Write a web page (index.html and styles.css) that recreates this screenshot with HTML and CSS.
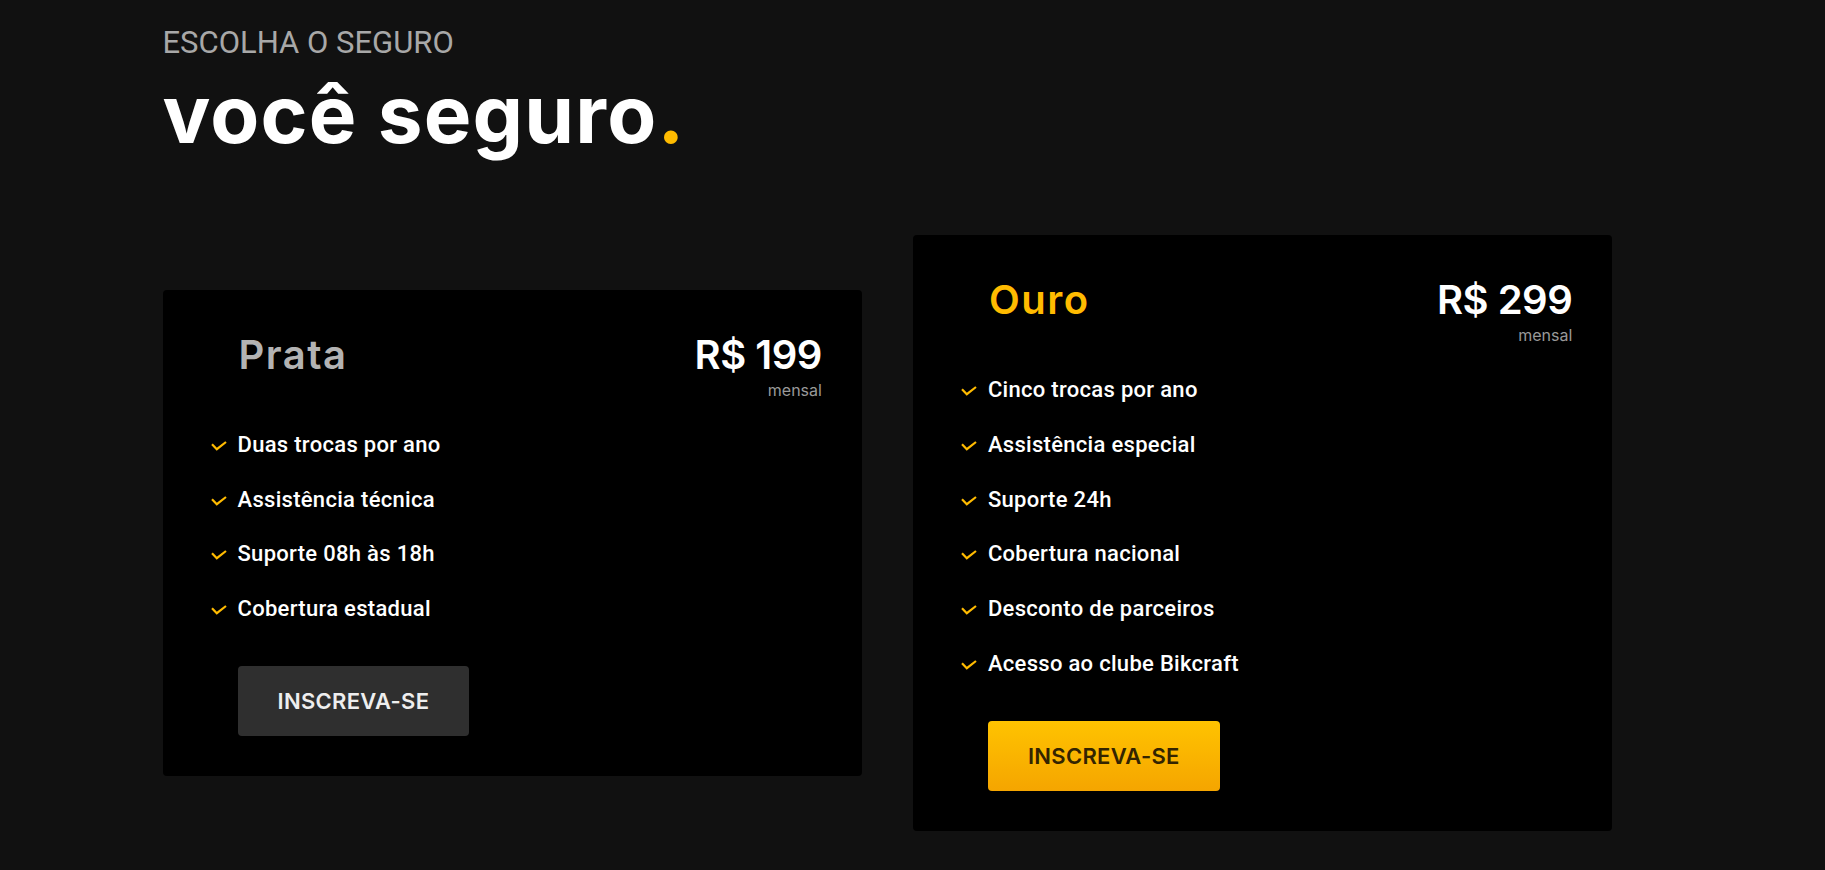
FILE: index.html
```html
<!DOCTYPE html>
<html lang="pt-BR">
<head>
<meta charset="utf-8">
<title>Seguros</title>
<link rel="stylesheet" href="styles.css">
</head>
<body>
<main class="planos">
  <header class="planos-header">
    <p class="planos-sub">ESCOLHA O SEGURO</p>
    <h1 class="planos-title">você seguro<span class="dot">.</span></h1>
  </header>
  <div class="planos-grid">
    <article class="plano plano-prata">
      <div class="plano-top">
        <h2 class="plano-nome">Prata</h2>
        <div class="plano-preco"><span class="valor">R$ 199</span><span class="periodo">mensal</span></div>
      </div>
      <ul class="plano-itens">
        <li><svg class="check" viewBox="0 0 16 10" width="16" height="10"><polyline points="1,3.2 5.8,8.2 15,1" /></svg>Duas trocas por ano</li>
        <li><svg class="check" viewBox="0 0 16 10" width="16" height="10"><polyline points="1,3.2 5.8,8.2 15,1" /></svg>Assistência técnica</li>
        <li><svg class="check" viewBox="0 0 16 10" width="16" height="10"><polyline points="1,3.2 5.8,8.2 15,1" /></svg>Suporte 08h às 18h</li>
        <li><svg class="check" viewBox="0 0 16 10" width="16" height="10"><polyline points="1,3.2 5.8,8.2 15,1" /></svg>Cobertura estadual</li>
      </ul>
      <a class="plano-btn" href="#">INSCREVA-SE</a>
    </article>
    <article class="plano plano-ouro">
      <div class="plano-top">
        <h2 class="plano-nome">Ouro</h2>
        <div class="plano-preco"><span class="valor">R$ 299</span><span class="periodo">mensal</span></div>
      </div>
      <ul class="plano-itens">
        <li><svg class="check" viewBox="0 0 16 10" width="16" height="10"><polyline points="1,3.2 5.8,8.2 15,1" /></svg>Cinco trocas por ano</li>
        <li><svg class="check" viewBox="0 0 16 10" width="16" height="10"><polyline points="1,3.2 5.8,8.2 15,1" /></svg>Assistência especial</li>
        <li><svg class="check" viewBox="0 0 16 10" width="16" height="10"><polyline points="1,3.2 5.8,8.2 15,1" /></svg>Suporte 24h</li>
        <li><svg class="check" viewBox="0 0 16 10" width="16" height="10"><polyline points="1,3.2 5.8,8.2 15,1" /></svg>Cobertura nacional</li>
        <li><svg class="check" viewBox="0 0 16 10" width="16" height="10"><polyline points="1,3.2 5.8,8.2 15,1" /></svg>Desconto de parceiros</li>
        <li><svg class="check" viewBox="0 0 16 10" width="16" height="10"><polyline points="1,3.2 5.8,8.2 15,1" /></svg>Acesso ao clube Bikcraft</li>
      </ul>
      <a class="plano-btn" href="#">INSCREVA-SE</a>
    </article>
  </div>
</main>
</body>
</html>
```

FILE: styles.css
```css
* { box-sizing: border-box; }

body {
  margin: 0;
  background: #111111;
  font-family: Roboto, "Liberation Sans", sans-serif;
  color: #fff;
}

.planos {
  width: 1500px;
  margin: 0 auto;
}

.planos-sub {
  margin: 0;
  padding-top: 25px;
  font-family: Roboto, "Liberation Sans", sans-serif;
  font-weight: 400;
  font-size: 31px;
  line-height: 36px;
  color: #a8a8a8;
}

.planos-title {
  margin: 5px 0 0;
  font-family: Inter, "Open Sans", sans-serif;
  font-weight: 700;
  font-size: 80px;
  line-height: 96px;
  letter-spacing: 1.2px;
  color: #fff;
}

.dot { color: #ffbb00; }

.planos-grid {
  display: grid;
  grid-template-columns: 699.4px 699.4px;
  column-gap: 51px;
  align-items: center;
  margin-top: 73px;
}

.plano {
  background: #000;
  border-radius: 4px;
  padding: 41px 40px 40px 48px;
}

.plano-top {
  display: flex;
  justify-content: space-between;
  align-items: flex-start;
  padding-left: 28px;
}

.plano-nome {
  margin: 0;
  font-family: Inter, "Open Sans", sans-serif;
  font-weight: 600;
  font-size: 40px;
  line-height: 48px;
  letter-spacing: 1.5px;
  color: #b3b3b3;
}

.plano-ouro .plano-nome { color: #ffbb00; }

.plano-preco {
  display: flex;
  flex-direction: column;
  align-items: flex-end;
  font-family: Inter, "Open Sans", sans-serif;
}

.valor {
  font-weight: 600;
  font-size: 40px;
  line-height: 48px;
  letter-spacing: -0.5px;
  color: #fff;
}

.periodo {
  font-weight: 400;
  font-size: 16px;
  line-height: 22px;
  color: #999;
}

.plano-itens {
  list-style: none;
  margin: 29.4px 0 0;
  padding: 0;
  display: flex;
  flex-direction: column;
  gap: 24.7px;
}

.plano-itens li {
  display: flex;
  align-items: center;
  gap: 11px;
  font-weight: 500;
  font-size: 22px;
  line-height: 30px;
  letter-spacing: 0.3px;
  color: #fff;
}

.check {
  flex: none;
  fill: none;
  stroke: #ffbb00;
  stroke-width: 2.2;
  margin-top: 2px;
}

.plano-btn {
  display: inline-flex;
  align-items: center;
  height: 70px;
  margin: 42px 0 0 27px;
  padding: 0 40px;
  border-radius: 4px;
  background: #2f2f2f;
  color: #eeeeee;
  text-decoration: none;
  font-family: Inter, "Open Sans", sans-serif;
  font-weight: 600;
  font-size: 22px;
  letter-spacing: 0.3px;
}

.plano-ouro .plano-btn {
  background: linear-gradient(#ffc300, #f5a500);
  color: #332400;
}
```
